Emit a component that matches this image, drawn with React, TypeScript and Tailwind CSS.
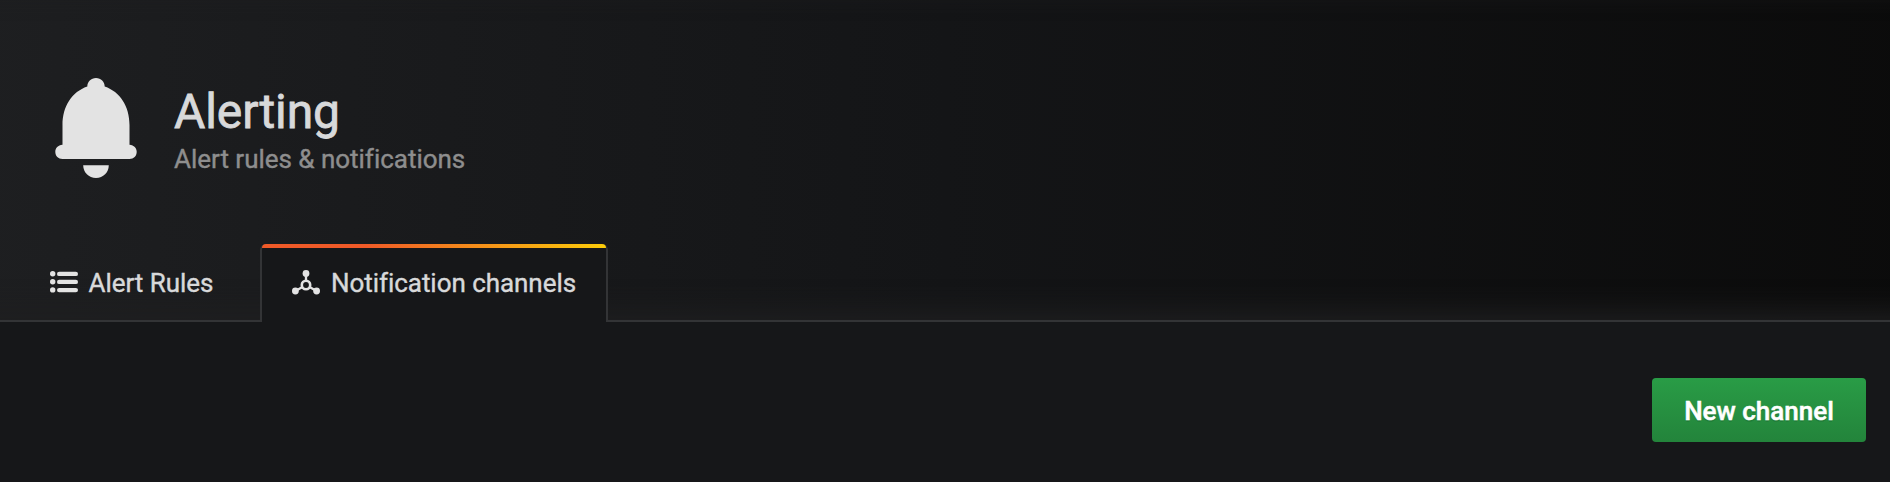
function BellIcon() {
  return (
    <svg width="82" height="100" viewBox="0 0 82 100" fill="#e3e3e3" className="shrink-0">
      <path d="M32.3 8.6C32.3 3.6 36 0 41 0s8.700 3.600 8.700 8.600C65 13.800 74.500 28.500 74.500 47v19.700C79 67 81.700 70 81.700 73.800c0 4.200-3 7.200-7.200 7.200H7.500C3.300 81 .3 78 .3 73.800.3 70 3 67 7.500 66.700V47C7.500 28.500 17 13.800 32.300 8.600Z" />
      <path d="M28.200 87.300h25.600C53.800 94.500 48.200 100 41 100s-12.800-5.500-12.800-12.700Z" />
    </svg>
  );
}

function ListIcon() {
  return (
    <svg width="28" height="22" viewBox="0 0 28 22" fill="#e3e3e3" className="mb-[2px] shrink-0">
      <circle cx="2.700" cy="2.700" r="2.700" />
      <circle cx="2.700" cy="10.800" r="2.700" />
      <circle cx="2.700" cy="18.900" r="2.700" />
      <rect x="7" y="0.700" width="21" height="4.400" rx="2.200" />
      <rect x="7" y="8.700" width="21" height="4.400" rx="2.200" />
      <rect x="7" y="16.900" width="21" height="4.400" rx="2.200" />
    </svg>
  );
}

function ChannelsIcon() {
  return (
    <svg width="28" height="25" viewBox="0 0 28 25" className="mb-[1px] shrink-0">
      <g stroke="#e3e3e3" strokeWidth="2.300" fill="none">
        <path d="M14 3v8M10 17.200 3.500 21M18 17.200l6.500 3.800" />
        <circle cx="14" cy="15" r="4.200" strokeWidth="2.600" />
      </g>
      <g fill="#e3e3e3">
        <circle cx="14" cy="3.400" r="3.400" />
        <circle cx="3.400" cy="21" r="3.400" />
        <circle cx="24.600" cy="21" r="3.400" />
      </g>
    </svg>
  );
}

export default function App() {
  return (
    <div className="flex h-[482px] w-full flex-col overflow-hidden bg-[#161719] font-[Roboto,sans-serif] text-[#d8d9da]">
      <header className="relative flex h-[322px] shrink-0 flex-col justify-between overflow-hidden">
        <div className="absolute -top-1 bottom-0 -left-10 -right-10 border-b-2 border-[#333436] bg-linear-to-r from-[#1e1f21] via-[#141517] to-[#0b0b0b] shadow-[inset_0_-8px_28px_#1f1f20]" />
        <div className="relative flex pl-[55px] pt-[78px]">
          <BellIcon />
          <div className="ml-[37px] pt-[9px]">
            <h1 className="text-[48px] font-normal leading-[50px] tracking-[-0.1px] [-webkit-text-stroke:0.8px_#d8d9da]">Alerting</h1>
            <p className="pt-[4px] text-[26px] leading-[36px] tracking-[-0.02px] text-[#8e8e8e] [-webkit-text-stroke:0.4px_#8e8e8e]">Alert rules &amp; notifications</p>
          </div>
        </div>
        <nav className="relative flex h-[78px] text-[26px] tracking-[-0.05px] [-webkit-text-stroke:0.4px_#d8d9da]">
          <a className="flex w-[260px] items-center gap-[10.500px] pl-[50px]">
            <ListIcon />
            <span>Alert Rules</span>
          </a>
          <a className="relative flex w-[348px] items-center gap-[11px] rounded-t-[6px] border-x-2 border-[#333436] bg-[#161719] pl-[30px]">
            <div className="absolute inset-x-0 top-0 h-[4px] rounded-t-[4px] bg-[linear-gradient(to_right,#f05a28_30%,#fbca0a_99%)]" />
            <ChannelsIcon />
            <span>Notification channels</span>
          </a>
        </nav>
      </header>
      <main className="flex justify-end pr-[24px] pt-[56px]">
        <button className="h-[64px] w-[214px] rounded-[4px] bg-linear-to-b from-[#299c46] to-[#23843b] pt-[2px] text-[26px] font-medium text-white [-webkit-text-stroke:0.5px_#fff] [text-shadow:0_2px_0_rgba(0,0,0,0.1)]">
          New channel
        </button>
      </main>
    </div>
  );
}
